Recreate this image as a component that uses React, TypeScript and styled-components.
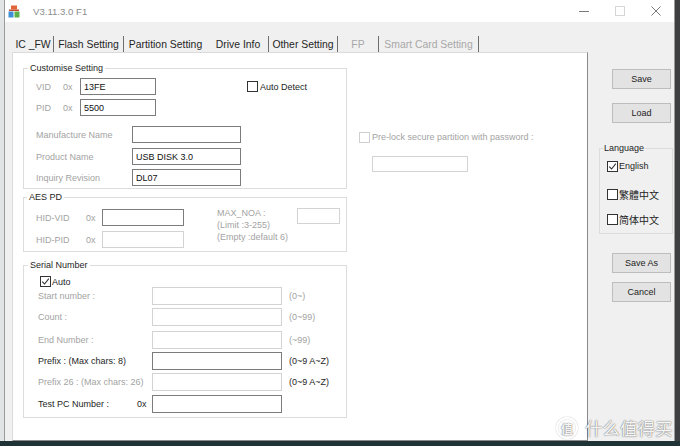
import React from 'react';
import styled, { createGlobalStyle } from 'styled-components';

const GlobalStyle = createGlobalStyle`
  html, body { margin: 0; padding: 0; }
  body {
    width: 680px; height: 446px; overflow: hidden;
    background: #263538;
    font-family: "Liberation Sans", Arial, sans-serif;
  }
  #root { width: 680px; height: 446px; }
`;

const Desktop = styled.div`
  position: relative;
  width: 680px;
  height: 446px;
  display: grid;
  grid-template-columns: 4px 671px 5px;
  grid-template-rows: 441px 5px;
  background: #243437;
`;

const LeftSliver = styled.div`
  background: #e2e5e5;
`;

const RightSliver = styled.div`
  background: #3d3f40;
`;

const BottomStrip = styled.div`
  grid-column: 1 / 4;
  background: #1f3236;
`;

const Window = styled.div`
  display: flex;
  flex-direction: column;
  background: #f0f0f0;
  border-left: 1px solid #9a9a9a;
  border-right: 1px solid #9a9a9a;
  overflow: hidden;
`;

const TitleBar = styled.div`
  height: 22px;
  flex: none;
  display: flex;
  align-items: center;
  background: #ffffff;
`;

const AppIcon = styled.svg`
  margin-left: 3px;
  width: 12px;
  height: 13px;
  flex: none;
`;

const Title = styled.span`
  margin-left: 13px;
  font-size: 9.6px;
  color: #8c8c8c;
`;

const Controls = styled.div`
  margin-left: auto;
  display: flex;
  height: 22px;
`;

const CtrlButton = styled.div`
  width: 36px;
  height: 22px;
  display: flex;
  align-items: center;
  justify-content: center;
`;

const Main = styled.div`
  flex: 1;
  display: flex;
`;

const LeftArea = styled.div`
  width: 583px;
  flex: none;
  display: flex;
  flex-direction: column;
`;

const TabStrip = styled.div`
  height: 30px;
  flex: none;
  display: flex;
  align-items: flex-end;
  padding-left: 8px;
`;

const Tab = styled.div<{ $w: number; $sep: boolean; $off?: boolean }>`
  box-sizing: border-box;
  width: ${p => p.$w}px;
  height: 16px;
  display: flex;
  align-items: center;
  justify-content: center;
  border-right: 1px solid ${p => (p.$sep ? '#6e6e6e' : 'transparent')};
  font-size: 10.4px;
  color: ${p => (p.$off ? '#a8a8a8' : '#262626')};
  white-space: nowrap;
`;

const Panel = styled.div`
  box-sizing: border-box;
  margin-left: 7px;
  width: 576px;
  height: 389px;
  background: #ffffff;
  border-top: 1px solid #dadada;
  border-left: 1px solid #dadada;
  border-right: 1px solid #8a8a8a;
  border-bottom: 1px solid #8a8a8a;
  display: flex;
  align-items: flex-start;
  padding: 9px 0 0 10px;
`;

const GroupColumn = styled.div`
  width: 324px;
  flex: none;
  display: flex;
  flex-direction: column;
`;

const Group = styled.fieldset<{ $mt?: number; $w?: number; $ml?: number }>`
  box-sizing: border-box;
  width: ${p => p.$w ?? 324}px;
  min-width: 0;
  margin: ${p => p.$mt ?? 0}px 0 0 ${p => p.$ml ?? 0}px;
  padding: 0;
  border: 1px solid #dcdcdc;
`;

const Legend = styled.legend<{ $ml?: number; $px?: number }>`
  margin-left: ${p => p.$ml ?? 4}px;
  padding: 0 ${p => p.$px ?? 2}px;
  font-size: 9px;
  line-height: 12px;
  color: #1e1e1e;
`;

const GroupBody = styled.div<{ $pad: string }>`
  padding: ${p => p.$pad};
  display: flex;
  flex-direction: column;
`;

const Row = styled.div<{ $mt?: number; $h?: number }>`
  display: flex;
  align-items: center;
  height: ${p => p.$h ?? 17}px;
  margin-top: ${p => p.$mt ?? 0}px;
`;

const Label = styled.span<{ $w?: number; $on?: boolean }>`
  ${p => (p.$w ? `width: ${p.$w}px;` : '')}
  flex: none;
  font-size: 9px;
  color: ${p => (p.$on ? '#1e1e1e' : '#a3a3a3')};
  white-space: nowrap;
`;

const Field = styled.input<{ $w: number; $h?: number; $on?: boolean; $ml?: number; $mt?: number }>`
  box-sizing: border-box;
  flex: none;
  width: ${p => p.$w}px;
  height: ${p => p.$h ?? 17}px;
  margin: ${p => p.$mt ?? 0}px 0 0 ${p => p.$ml ?? 0}px;
  padding: 0 3px;
  border: 1px solid ${p => (p.$on ? '#7c7c7c' : '#d3d3d3')};
  border-radius: 0;
  background: #ffffff;
  font-family: "Liberation Sans", Arial, sans-serif;
  font-size: 9px;
  color: #111111;
  outline: none;
  &:disabled { background: #ffffff; }
`;

const CheckRow = styled.label<{ $ml?: number; $mt?: number; $gap?: number; $h?: number }>`
  display: flex;
  align-items: center;
  height: ${p => p.$h ?? 12}px;
  gap: ${p => p.$gap ?? 2}px;
  margin: ${p => p.$mt ?? 0}px 0 0 ${p => p.$ml ?? 0}px;
  flex: none;
`;

const Box = styled.span<{ $on?: boolean }>`
  box-sizing: border-box;
  width: 11px;
  height: 11px;
  flex: none;
  border: 1px solid ${p => (p.$on ? '#333333' : '#cfcfcf')};
  background: #ffffff;
  display: inline-flex;
  align-items: center;
  justify-content: center;
`;

const Hint = styled.span<{ $on?: boolean }>`
  margin-left: 7px;
  font-size: 9px;
  color: ${p => (p.$on ? '#1e1e1e' : '#a3a3a3')};
  white-space: nowrap;
`;

const AesBody = styled.div`
  display: flex;
  align-items: flex-start;
  padding: 6px 0 3px 12px;
`;

const AesFields = styled.div`
  display: flex;
  flex-direction: column;
  gap: 5px;
`;

const Note = styled.div`
  width: 80px;
  margin: -2px 0 0 33px;
  font-size: 9px;
  line-height: 12px;
  color: #a3a3a3;
  white-space: nowrap;
`;

const SideColumn = styled.div`
  margin: 69px 0 0 12px;
  display: flex;
  flex-direction: column;
`;

const Sidebar = styled.div`
  flex: 1;
  display: flex;
  flex-direction: column;
  align-items: flex-start;
  padding-top: 47px;
`;

const Button = styled.div<{ $mt?: number }>`
  box-sizing: border-box;
  margin: ${p => p.$mt ?? 0}px 0 0 24px;
  width: 59px;
  height: 20px;
  display: flex;
  align-items: center;
  justify-content: center;
  background: #e3e3e3;
  border: 1px solid #bdbdbd;
  font-size: 9px;
  color: #222222;
`;

const LangBody = styled.div`
  display: flex;
  flex-direction: column;
  padding: 6px 0 8px 7px;
`;

const Cjk = styled.span<{ $tc?: boolean }>`
  font-family: ${p => (p.$tc ? '"Noto Sans CJK TC"' : '"Noto Sans CJK SC"')}, sans-serif;
  font-size: 10px;
  color: #1e1e1e;
  white-space: nowrap;
`;

const Watermark = styled.div`
  position: absolute;
  left: 556px;
  top: 417px;
  display: flex;
  align-items: center;
  gap: 7px;
  color: rgba(255, 255, 255, 0.95);
  font-family: "Noto Sans CJK SC", sans-serif;
  text-shadow: 0 0 1px rgba(0, 0, 0, 0.55), 0 0 2px rgba(0, 0, 0, 0.3);
`;

const WmBadge = styled.span`
  box-sizing: border-box;
  width: 22px;
  height: 22px;
  border-radius: 50%;
  border: 2px solid rgba(255, 255, 255, 0.95);
  box-shadow: 0 0 1px rgba(0, 0, 0, 0.5), inset 0 0 1px rgba(0, 0, 0, 0.4);
  display: flex;
  align-items: center;
  justify-content: center;
  font-size: 12px;
  font-weight: 700;
`;

const WmText = styled.span`
  font-size: 17.5px;
  line-height: 20px;
`;

const Check = () => (
  <svg width="9" height="9" viewBox="0 0 9 9">
    <polyline points="1.2,4.6 3.6,7 7.8,1.6" fill="none" stroke="#333" strokeWidth="1.1" />
  </svg>
);

const tabs = [
  { label: 'IC _FW', w: 41, sep: true },
  { label: 'Flash Setting', w: 70, sep: true },
  { label: 'Partition Setting', w: 84, sep: false },
  { label: 'Drive Info', w: 61, sep: true },
  { label: 'Other Setting', w: 69, sep: true },
  { label: 'FP', w: 41, sep: true, off: true },
  { label: 'Smart Card Setting', w: 100, sep: true, off: true },
];

const serialRows = [
  { label: 'Start number :', hint: '(0~)', mt: 0 },
  { label: 'Count :', hint: '(0~99)', mt: 3 },
  { label: 'End Number :', hint: '(~99)', mt: 5 },
];

export default function App() {
  return (
    <>
      <GlobalStyle />
      <Desktop>
        <LeftSliver />
        <Window>
          <TitleBar>
            <AppIcon viewBox="0 0 12 13">
              <rect x="3" y="0.5" width="6" height="4" fill="#e0663a" />
              <rect x="1" y="4.5" width="10" height="1.5" fill="#c94a2c" />
              <rect x="0.5" y="6.5" width="5" height="6" fill="#3f8fd6" />
              <rect x="6.5" y="6.5" width="5" height="6" fill="#5cb04a" />
            </AppIcon>
            <Title>V3.11.3.0 F1</Title>
            <Controls>
              <CtrlButton>
                <svg width="10" height="10" viewBox="0 0 10 10">
                  <line x1="0" y1="5.5" x2="10" y2="5.5" stroke="#7a7a7a" strokeWidth="1" />
                </svg>
              </CtrlButton>
              <CtrlButton>
                <svg width="10" height="10" viewBox="0 0 10 10">
                  <rect x="0.5" y="0.5" width="9" height="9" fill="none" stroke="#d6d6d6" strokeWidth="1" />
                </svg>
              </CtrlButton>
              <CtrlButton>
                <svg width="10" height="10" viewBox="0 0 10 10">
                  <line x1="0.5" y1="0.5" x2="9.5" y2="9.5" stroke="#7a7a7a" strokeWidth="1" />
                  <line x1="9.5" y1="0.5" x2="0.5" y2="9.5" stroke="#7a7a7a" strokeWidth="1" />
                </svg>
              </CtrlButton>
            </Controls>
          </TitleBar>
          <Main>
            <LeftArea>
              <TabStrip>
                {tabs.map(t => (
                  <Tab key={t.label} $w={t.w} $sep={t.sep} $off={t.off}>
                    {t.label}
                  </Tab>
                ))}
              </TabStrip>
              <Panel>
                <GroupColumn>
                  <Group>
                    <Legend>Customise Setting</Legend>
                    <GroupBody $pad="4px 0 2px 12px">
                      <Row>
                        <Label $w={27}>VID</Label>
                        <Label $w={17}>0x</Label>
                        <Field $w={76} $on readOnly value="13FE" />
                        <CheckRow $ml={91}>
                          <Box $on />
                          <Label $on>Auto Detect</Label>
                        </CheckRow>
                      </Row>
                      <Row $mt={4}>
                        <Label $w={27}>PID</Label>
                        <Label $w={17}>0x</Label>
                        <Field $w={76} $on readOnly value="5500" />
                      </Row>
                      <Row $mt={10}>
                        <Label $w={96}>Manufacture Name</Label>
                        <Field $w={109} $on readOnly value="" />
                      </Row>
                      <Row $mt={5}>
                        <Label $w={96}>Product Name</Label>
                        <Field $w={109} $on readOnly value="USB DISK 3.0" />
                      </Row>
                      <Row $mt={4}>
                        <Label $w={96}>Inquiry Revision</Label>
                        <Field $w={109} $on readOnly value="DL07" />
                      </Row>
                    </GroupBody>
                  </Group>

                  <Group $mt={2}>
                    <Legend $ml={3}>AES PD</Legend>
                    <AesBody>
                      <AesFields>
                        <Row>
                          <Label $w={50}>HID-VID</Label>
                          <Label $w={16}>0x</Label>
                          <Field $w={82} $on readOnly value="" />
                        </Row>
                        <Row>
                          <Label $w={50}>HID-PID</Label>
                          <Label $w={16}>0x</Label>
                          <Field $w={82} disabled />
                        </Row>
                      </AesFields>
                      <Note>
                        MAX_NOA :<br />
                        (Limit :3-255)<br />
                        (Empty :default 6)
                      </Note>
                      <Field $w={43} $h={16} $mt={-1} disabled />
                    </AesBody>
                  </Group>

                  <Group $mt={7}>
                    <Legend>Serial Number</Legend>
                    <GroupBody $pad="5px 0 4px 14px">
                      <CheckRow $ml={2} $gap={1} $h={11}>
                        <Box $on>
                          <Check />
                        </Box>
                        <Label $on>Auto</Label>
                      </CheckRow>
                      {serialRows.map(r => (
                        <Row key={r.label} $mt={r.mt} $h={18}>
                          <Label $w={114}>{r.label}</Label>
                          <Field $w={130} $h={18} disabled />
                          <Hint>{r.hint}</Hint>
                        </Row>
                      ))}
                      <Row $mt={3} $h={18}>
                        <Label $w={114} $on>Prefix : (Max chars: 8)</Label>
                        <Field $w={130} $h={18} $on readOnly value="" />
                        <Hint $on>(0~9 A~Z)</Hint>
                      </Row>
                      <Row $mt={3} $h={18}>
                        <Label $w={114}>Prefix 26 : (Max chars: 26)</Label>
                        <Field $w={130} $h={18} disabled />
                        <Hint $on>(0~9 A~Z)</Hint>
                      </Row>
                      <Row $mt={4} $h={18}>
                        <Label $w={99} $on>Test PC Number :</Label>
                        <Label $w={15} $on>0x</Label>
                        <Field $w={130} $h={18} $on readOnly value="" />
                      </Row>
                    </GroupBody>
                  </Group>
                </GroupColumn>

                <SideColumn>
                  <CheckRow $gap={2}>
                    <Box />
                    <Label>Pre-lock secure partition with password :</Label>
                  </CheckRow>
                  <Field $w={96} $h={16} $ml={13} $mt={13} disabled />
                </SideColumn>
              </Panel>
            </LeftArea>

            <Sidebar>
              <Button>Save</Button>
              <Button $mt={14}>Load</Button>
              <Group $w={74} $mt={19} $ml={11}>
                <Legend $ml={3} $px={1}>Language</Legend>
                <LangBody>
                  <CheckRow $gap={1}>
                    <Box $on>
                      <Check />
                    </Box>
                    <Label $on>English</Label>
                  </CheckRow>
                  <CheckRow $gap={1} $mt={16}>
                    <Box $on />
                    <Cjk $tc>繁體中文</Cjk>
                  </CheckRow>
                  <CheckRow $gap={1} $mt={13}>
                    <Box $on />
                    <Cjk>简体中文</Cjk>
                  </CheckRow>
                </LangBody>
              </Group>
              <Button $mt={19}>Save As</Button>
              <Button $mt={9}>Cancel</Button>
            </Sidebar>
          </Main>
        </Window>
        <RightSliver />
        <BottomStrip />
        <Watermark>
          <WmBadge>值</WmBadge>
          <WmText>什么值得买</WmText>
        </Watermark>
      </Desktop>
    </>
  );
}
